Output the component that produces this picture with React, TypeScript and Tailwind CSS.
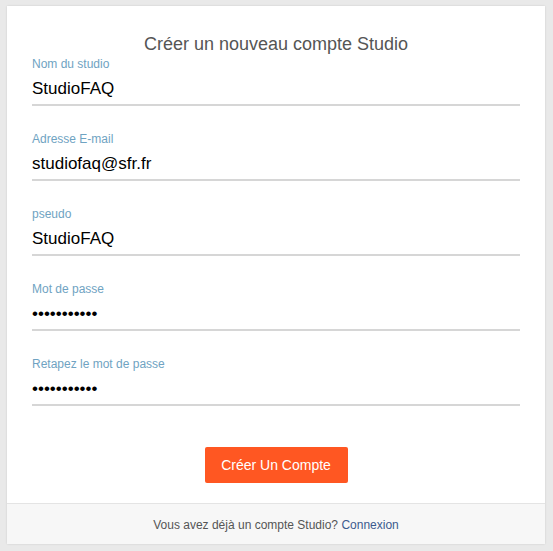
const fields = [
  { label: "Nom du studio", value: "StudioFAQ", type: "text" },
  { label: "Adresse E-mail", value: "studiofaq@sfr.fr", type: "text" },
  { label: "pseudo", value: "StudioFAQ", type: "text" },
  { label: "Mot de passe", value: "motdepasse1", type: "password" },
  { label: "Retapez le mot de passe", value: "motdepasse1", type: "password" },
];

export default function App() {
  return (
    <div className="min-h-[551px] bg-[#e9e9e9] pt-[6px] pl-[7px] font-['Liberation_Sans',Arial,sans-serif]">
      <div className="flex h-[538px] w-[538px] flex-col bg-white shadow-[0_0_2px_rgba(0,0,0,0.12)]">
        <div className="flex-1 px-[25px] pt-[27px]">
          <h1 className="text-center text-[18px] leading-[22px] text-[#555]">Créer un nouveau compte Studio</h1>
          <div className="mt-[1px] flex flex-col gap-[25px]">
            {fields.map((f) => (
              <div key={f.label} className="flex flex-col">
                <label className="pt-[1px] text-[12px] leading-[14px] text-[#6fa3c2]">{f.label}</label>
                <input
                  readOnly
                  type={f.type}
                  value={f.value}
                  className="h-[35px] w-full border-b-2 border-[#d6d6d6] bg-transparent pt-[3px] text-[17px] text-black outline-none"
                />
              </div>
            ))}
          </div>
          <div className="mt-[41px] flex justify-center">
            <button className="h-[36px] w-[143px] rounded-[2px] bg-[#ff5722] text-[14px] text-white">Créer Un Compte</button>
          </div>
        </div>
        <div className="flex h-[41px] items-center justify-center border-t border-[#e4e4e4] bg-[#f7f7f7] pt-[2px] text-[12px] text-[#555]">
          <span>
            Vous avez déjà un compte Studio? <a className="text-[#3c5a8e]">Connexion</a>
          </span>
        </div>
      </div>
    </div>
  );
}
